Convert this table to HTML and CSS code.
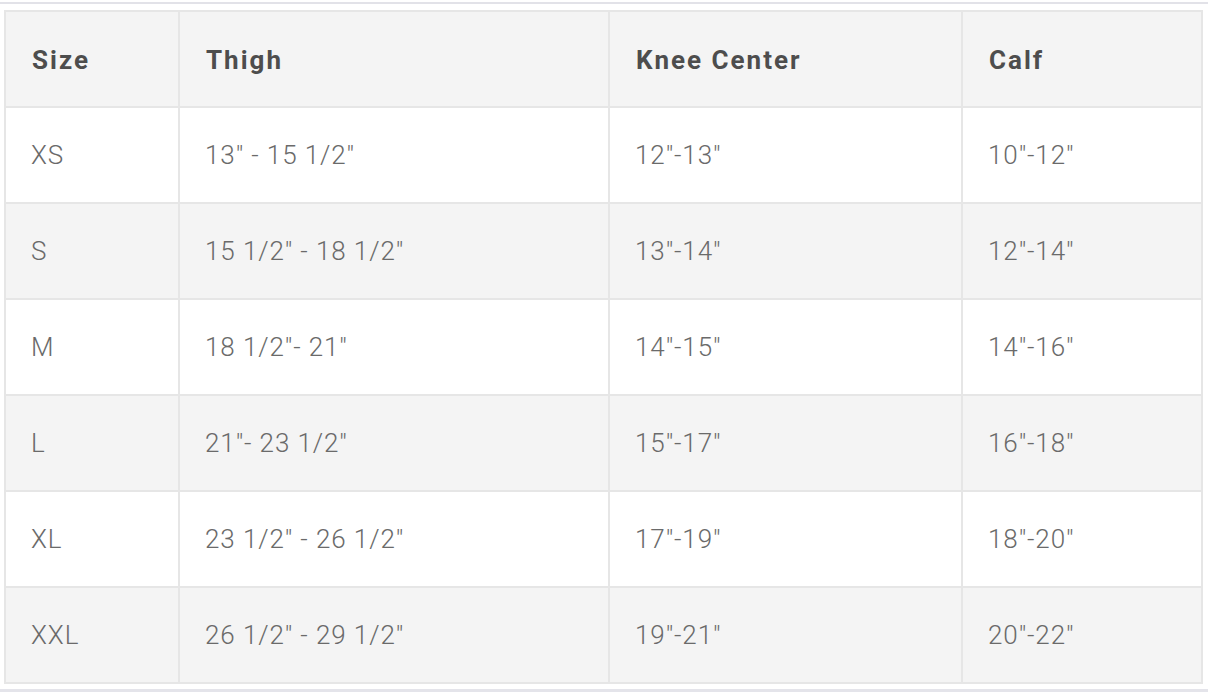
FILE: index.html
```html
<!DOCTYPE html>
<html>
<head>
<meta charset="utf-8">
<link rel="stylesheet" href="styles.css">
</head>
<body>
<div class="frame">
  <table class="size-table">
    <colgroup>
      <col class="c1"><col class="c2"><col class="c3"><col class="c4">
    </colgroup>
    <thead>
      <tr><th>Size</th><th>Thigh</th><th>Knee Center</th><th>Calf</th></tr>
    </thead>
    <tbody>
      <tr><td>XS</td><td>13" - 15 1/2"</td><td>12"-13"</td><td>10"-12"</td></tr>
      <tr><td>S</td><td>15 1/2" - 18 1/2"</td><td>13"-14"</td><td>12"-14"</td></tr>
      <tr><td>M</td><td>18 1/2"- 21"</td><td>14"-15"</td><td>14"-16"</td></tr>
      <tr><td>L</td><td>21"- 23 1/2"</td><td>15"-17"</td><td>16"-18"</td></tr>
      <tr><td>XL</td><td>23 1/2" - 26 1/2"</td><td>17"-19"</td><td>18"-20"</td></tr>
      <tr><td>XXL</td><td>26 1/2" - 29 1/2"</td><td>19"-21"</td><td>20"-22"</td></tr>
    </tbody>
  </table>
</div>
</body>
</html>
```
FILE: styles.css
```css
html, body {
  margin: 0;
  padding: 0;
  background: #ffffff;
}
body {
  padding-top: 2px;
  font-family: Roboto, "Liberation Sans", sans-serif;
}
.frame {
  width: 1208px;
  box-sizing: border-box;
  border-top: 2px solid #e2e2e8;
  border-bottom: 3px solid #e4e4ea;
  padding: 6px 5px 5px 4px;
}
.size-table {
  width: 1199px;
  table-layout: fixed;
  border-collapse: separate;
  border-spacing: 0;
  border-top: 2px solid #e6e6e6;
  border-left: 2px solid #e6e6e6;
}
.c1 { width: 174px; }
.c2 { width: 430px; }
.c3 { width: 353px; }
.c4 { width: 240px; }
.size-table th,
.size-table td {
  box-sizing: border-box;
  height: 96px;
  padding: 0 0 0 25px;
  text-align: left;
  vertical-align: middle;
  border-right: 2px solid #e6e6e6;
  border-bottom: 2px solid #e6e6e6;
  white-space: nowrap;
}
.size-table th {
  background: #f4f4f4;
  color: #4d4d4d;
  font-size: 26px;
  font-weight: 700;
  letter-spacing: 2px;
  padding-top: 2px;
  padding-left: 26px;
}
.size-table td {
  color: #6a6a6a;
  font-size: 26px;
  font-weight: 300;
  letter-spacing: 0.9px;
}
.size-table tbody tr:nth-child(even) td {
  background: #f4f4f4;
}
```
